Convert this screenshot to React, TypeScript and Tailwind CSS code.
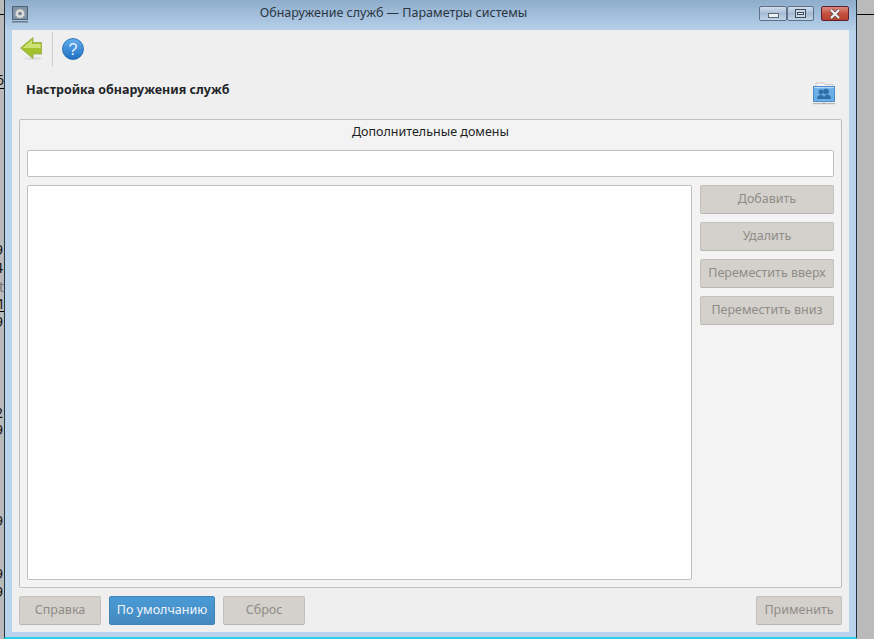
import React from "react";

const font = { fontFamily: '"Noto Sans", "Open Sans", sans-serif' };

function Btn({ children, w, primary }: { children: React.ReactNode; w?: string; primary?: boolean }) {
  if (primary) {
    return (
      <div className={`h-[29px] ${w} flex items-center justify-center rounded-[2px] border border-[#3f85b8] bg-gradient-to-b from-[#4a9bd6] to-[#4489bf] text-[12.5px] text-[#f2f6fa]`}>
        {children}
      </div>
    );
  }
  return (
    <div className={`h-[29px] ${w} flex items-center justify-center rounded-[2px] border border-[#c4c1bc] border-b-[#b9b6b1] bg-[#d4d1cc] text-[12.5px] text-[#8f8c88]`}>
      {children}
    </div>
  );
}

function Backdrop() {
  const marks: [number, string, number, string][] = [
    [73, "6", -4, "#111"], [243, "9", -5, "#111"], [261, "4", -5, "#111"], [280, "t", -1, "#777"], [297, "1", -3, "#111"],
    [315, "9", -5, "#111"], [406, "2", -5, "#111"], [423, "9", -5, "#111"], [514, "9", -5, "#111"], [567, "9", -5, "#111"], [585, "9", -5, "#111"],
  ];
  return (
    <>
      {marks.map(([y, c, x, col], i) => (
        <span key={i} className="absolute text-[14px] leading-[14px]" style={{ top: y, left: x, color: col }}>{c}</span>
      ))}
    </>
  );
}

export default function App() {
  return (
    <div className="relative flex h-[639px] w-[874px] overflow-hidden bg-[#bababa] text-[#1c1c1c]" style={font}>
      <Backdrop />
      <div className="absolute left-0 top-[14px] h-px w-[4px] bg-black" />
      <div className="absolute left-0 top-[88px] h-px w-[4px] bg-black" />
      <div className="absolute left-0 top-[311px] h-px w-[4px] bg-black" />
      <div className="absolute left-[857px] top-[14px] h-px w-[17px] bg-black" />
      <div className="ml-[4px] flex h-[639px] w-[853px] flex-col border-x border-b-2 border-x-[#23343f] border-b-[#2fd0e8] bg-[#bbd4ee]">
        <div className="flex h-[30px] shrink-0 items-center bg-gradient-to-b from-[#8eaccb] to-[#b6d0ea] pl-[7px] pr-[7px]">
          <svg width="16" height="17" viewBox="0 0 16 17" className="mt-[-2px]">
            <rect x="0.5" y="0.5" width="15" height="13" fill="#7f93a8" stroke="#4f6072" />
            <path d="M8 2.5 L9.2 3.6 L11 3.2 L11.5 5 L13 6 L12.4 7.7 L13 9.4 L11.5 10.3 L11 12 L9.2 11.7 L8 12.8 L6.8 11.7 L5 12 L4.5 10.3 L3 9.4 L3.6 7.7 L3 6 L4.5 5 L5 3.2 L6.8 3.6 Z" fill="#dcdcdc" stroke="#8a8a8a" strokeWidth="0.5" />
            <circle cx="8" cy="7.6" r="1.8" fill="#77828e" />
            <rect x="0" y="15" width="16" height="1.5" fill="#6d7b88" />
          </svg>
          <div className="flex-1 pb-[3px] text-center text-[12.5px] text-[#2b3642]">Обнаружение служб — Параметры системы</div>
          <div className="mb-[3px] flex items-center">
            <div className="flex h-[15px] w-[28px] items-center justify-center rounded-[2px] border border-[#5f7089] bg-gradient-to-b from-[#d0dded] via-[#a6bcd4] to-[#c2d4e7]">
              <div className="mt-[3px] h-[5px] w-[11px] border border-[#5a6777] bg-[#eef2f6]" />
            </div>
            <div className="flex h-[15px] w-[27px] items-center justify-center rounded-[2px] border border-[#5f7089] bg-gradient-to-b from-[#d0dded] via-[#a6bcd4] to-[#c2d4e7]">
              <div className="flex h-[9px] w-[11px] items-center justify-center border border-[#3f4c5c] bg-[#c8d5e3]"><div className="h-[3px] w-[7px] border border-[#3f4c5c] bg-[#eef2f6]" /></div>
            </div>
            <div className="ml-[7px] flex h-[15px] w-[28px] items-center justify-center rounded-[2px] border border-[#5e2030] bg-gradient-to-b from-[#d98a80] via-[#c5503f] to-[#b8402f]">
              <svg width="14" height="10" viewBox="0 0 14 10">
                <path d="M3 1 L11 9 M11 1 L3 9" stroke="#5a4a48" strokeWidth="3.6" />
                <path d="M3 1 L11 9 M11 1 L3 9" stroke="#f4f4f4" strokeWidth="2.2" />
              </svg>
            </div>
          </div>
        </div>
        <div className="mx-[7px] mb-[5px] flex min-h-0 flex-1 flex-col bg-[#efefef]">
          <div className="flex h-[37px] shrink-0 items-center pl-[8px]">
            <svg width="22" height="24" viewBox="0 0 22 24">
              <ellipse cx="13" cy="21.5" rx="9" ry="1.5" fill="#dcdcdc" />
              <path d="M0.5 11 L13 0.5 V5.5 H21.5 V17 H13 V21.5 Z" fill="#a4c22e" stroke="#8ea63c" strokeWidth="0.7" />
              <path d="M2.5 11 L12 3 V7 H20.5 V11 Z" fill="#cbe274" />
            </svg>
            <div className="ml-[10px] h-[34px] w-px bg-[#c9c9c9]" />
            <svg width="22" height="22" viewBox="0 0 22 22" className="ml-[9px]">
              <defs>
                <linearGradient id="h" x1="0" y1="0" x2="0" y2="1">
                  <stop offset="0" stopColor="#62aef0" />
                  <stop offset="1" stopColor="#1f6fc0" />
                </linearGradient>
              </defs>
              <circle cx="11" cy="11" r="10.5" fill="url(#h)" stroke="#1d63ab" strokeWidth="0.8" />
              <text x="11" y="16.5" textAnchor="middle" fontSize="16" fill="#e9f3fc" style={{ fontFamily: '"Liberation Sans", sans-serif' }}>?</text>
            </svg>
          </div>
          <div className="flex h-[52px] shrink-0 items-start justify-between pl-[14px] pr-[14px]">
            <div className="pt-[14px] text-[12.5px] font-bold leading-[18px] text-[#232629]">Настройка обнаружения служб</div>
            <svg width="22" height="23" viewBox="0 0 22 23" className="mt-[15px]">
              <path d="M3 4 V1 H11 L12 2.5 H20 V5 H2 Z" fill="#f6f6f6" stroke="#bdbdbd" strokeWidth="0.8" />
              <rect x="0.5" y="4.5" width="21" height="15" fill="#6aaee8" stroke="#4a8bc8" />
              <rect x="1" y="5" width="20" height="1.2" fill="#b4d9f7" />
              <circle cx="8" cy="10" r="2.4" fill="#2f6ea6" />
              <circle cx="13" cy="9.5" r="2.8" fill="#2f6ea6" />
              <path d="M4 17 Q4 13 8 13 Q10.5 13 11 15 Q12 12.5 14 12.5 Q18 12.5 18 17 Z" fill="#2f6ea6" />
              <rect x="0" y="21" width="22" height="1.2" fill="#b5b5b5" />
              <rect x="10" y="19.5" width="2" height="2" fill="#b5b5b5" />
            </svg>
          </div>
          <div className="mx-[7px] flex h-[469px] shrink-0 flex-col rounded-[2px] border border-[#bfbfbf] bg-[#f3f3f3] px-[7px] pb-[7px]">
            <div className="h-[30px] pt-[2px] text-center text-[12.5px] leading-[20px] text-[#1f1f1f]">Дополнительные домены</div>
            <div className="h-[27px] shrink-0 rounded-[2px] border border-[#c0c0c0] bg-white" />
            <div className="mt-[8px] flex min-h-0 flex-1 gap-[8px]">
              <div className="h-full w-[665px] rounded-[2px] border border-[#c0c0c0] bg-white" />
              <div className="flex w-[134px] flex-col gap-[8px]">
                <Btn w="w-full">Добавить</Btn>
                <Btn w="w-full">Удалить</Btn>
                <Btn w="w-full">Переместить вверх</Btn>
                <Btn w="w-full">Переместить вниз</Btn>
              </div>
            </div>
          </div>
          <div className="mt-[8px] flex gap-[8px] px-[7px]">
            <Btn w="w-[82px]">Справка</Btn>
            <Btn w="w-[106px]" primary>По умолчанию</Btn>
            <Btn w="w-[82px]">Сброс</Btn>
            <div className="ml-auto"><Btn w="w-[86px]">Применить</Btn></div>
          </div>
        </div>
      </div>
    </div>
  );
}
